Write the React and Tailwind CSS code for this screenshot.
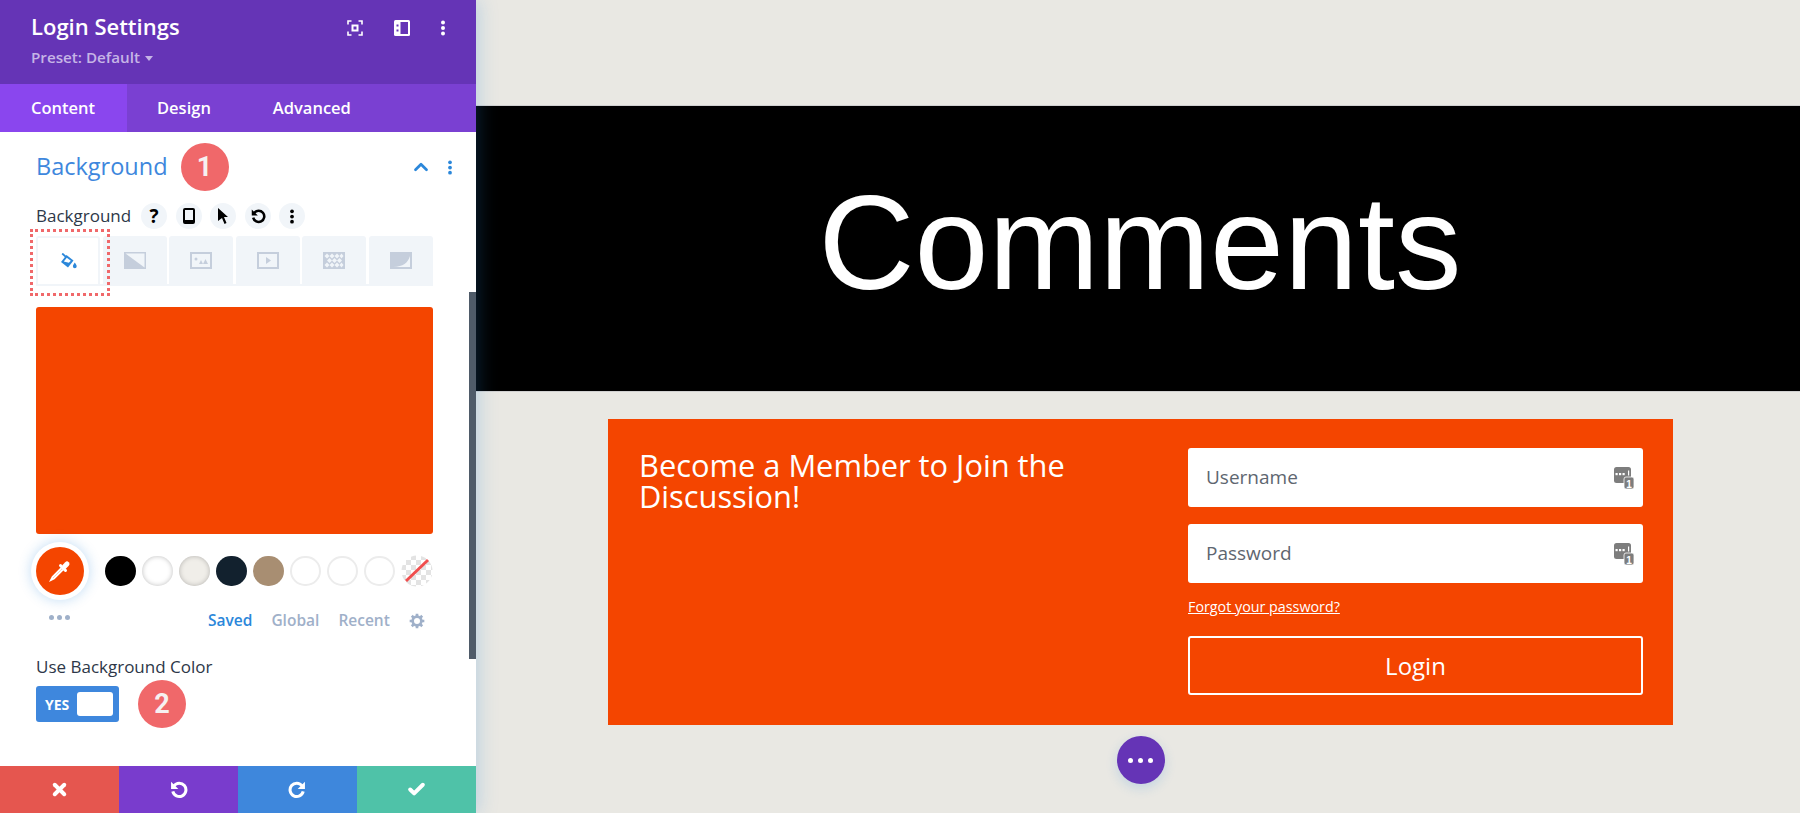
import { Check, ChevronUp, X } from 'lucide-react'

const openSans = "font-['Open_Sans',sans-serif]"

function Dots({ className = '' }) {
  return (
    <svg viewBox="0 0 6 16" className={className} fill="currentColor">
      <circle cx="3" cy="2.5" r="2" />
      <circle cx="3" cy="8" r="2" />
      <circle cx="3" cy="13.5" r="2" />
    </svg>
  )
}

function UndoIcon({ className = '', flip = false }) {
  return (
    <svg viewBox="0 0 20 20" className={`${className} ${flip ? '-scale-x-100' : ''}`} fill="none">
      <path d="M5.2 6.2A7 7 0 1 1 4 12" stroke="currentColor" strokeWidth="3.2" />
      <path d="M2.2 1.8v7.600h7.600z" fill="currentColor" />
    </svg>
  )
}

function OnePassword() {
  return (
    <svg viewBox="0 0 20 22" className="absolute right-[9px] top-[19px] h-[22px] w-[20px]">
      <rect x="0" y="0" width="17" height="16" rx="2.5" fill="#7d7d7d" />
      <rect x="10" y="10" width="10" height="12" rx="2" fill="#7d7d7d" stroke="#fff" strokeWidth="0.8" />
      <rect x="1.5" y="6" width="2.2" height="2.2" fill="#fff" />
      <rect x="5" y="6" width="2.2" height="2.2" fill="#fff" />
      <rect x="8.5" y="6" width="2.2" height="2.2" fill="#fff" />
      <rect x="14" y="3.5" width="1.2" height="5" fill="#fff" />
      <text x="15" y="20.5" textAnchor="middle" fontSize="10" fontWeight="700" fill="#fff" fontFamily="Liberation Sans, sans-serif">1</text>
    </svg>
  )
}

function Badge({ children, className = '' }) {
  return (
    <div className={`flex h-[48px] w-[48px] shrink-0 items-center justify-center rounded-full bg-[#f0686a] text-[27px] font-bold text-[#f6f1f1] font-['Roboto',sans-serif] ${className}`}>
      {children}
    </div>
  )
}

function RoundBtn({ children }) {
  return <div className="flex h-[26px] w-[26px] items-center justify-center rounded-full bg-[#f1f5f9] text-black">{children}</div>
}

const bgTabs = [
  <svg key="grad" viewBox="0 0 22 17" className="h-[17px] w-[22px]"><path d="M0 0h22v17H0z" fill="#c5cedc" /><path d="M1.5 1.5L20.5 15.5V1.5z" fill="#f1f5f9" /></svg>,
  <svg key="img" viewBox="0 0 22 17" className="h-[17px] w-[22px]"><rect x="1" y="1" width="20" height="15" fill="none" stroke="#c5cedc" strokeWidth="2" /><path d="M9 12l2-4 2 4zM13 12l2.500-5 2.500 5z" fill="#c5cedc" /><circle cx="6" cy="7" r="1.500" fill="#c5cedc" /></svg>,
  <svg key="vid" viewBox="0 0 22 17" className="h-[17px] w-[22px]"><rect x="1" y="1" width="20" height="15" fill="none" stroke="#c5cedc" strokeWidth="2" /><path d="M9 5l5 3.500-5 3.500z" fill="#c5cedc" /></svg>,
  <svg key="pat" viewBox="0 0 22 17" className="h-[17px] w-[22px]">
    <path d="M0 0h22v17H0z" fill="#c5cedc" />
    <path d="M1.500 4L4 1.500 6.500 4 4 6.500zM6.500 4L9 1.500 11.500 4 9 6.500zM11.500 4L14 1.500 16.500 4 14 6.500zM16.500 4L18.500 1.500 20.500 4 18.500 6.500zM4 8.500l2.500-2.500L9 8.500 6.500 11zM9 8.500l2.500-2.500L14 8.500 11.500 11zM14 8.500l2.500-2.500L19 8.500 16.500 11zM1.500 13L4 10.500 6.500 13 4 15.500zM6.500 13L9 10.500 11.500 13 9 15.500zM11.500 13L14 10.500 16.500 13 14 15.500zM16.500 13L18.500 10.500 20.500 13 18.500 15.500z" fill="#f1f5f9" />
  </svg>,
  <svg key="mask" viewBox="0 0 22 17" className="h-[17px] w-[22px]"><path d="M0 0h22v17H0z" fill="#c5cedc" /><path d="M20 4V15H3.500C13 14.500 18 11 20 4z" fill="#f1f5f9" /></svg>,
]

const swatches = [
  'bg-black',
  'bg-white shadow-[inset_0_0_5px_rgba(0,0,0,0.25)]',
  'bg-[#f0eee9] shadow-[inset_0_0_5px_rgba(0,0,0,0.25)]',
  'bg-[#12212e]',
  'bg-[#a88e72]',
  'bg-white border-2 border-[#ececec]',
  'bg-white border-2 border-[#ececec]',
  'bg-white border-2 border-[#ececec]',
]

function Sidebar() {
  return (
    <div className={`relative z-10 flex h-[813px] w-[476px] shrink-0 flex-col bg-white shadow-[2px_0_18px_rgba(43,135,218,0.25)] ${openSans}`}>
      {/* Header */}
      <div className="flex h-[84px] items-start justify-between bg-[#6534b6] pl-[31px] pr-[30px]">
        <div>
          <div className="mt-[11px] text-[22px] font-semibold leading-[30px] text-white">Login Settings</div>
          <div className="mt-[6px] flex items-center text-[15.200px] font-semibold leading-[20px] text-[#c5b4e6]">
            Preset: Default
            <span className="ml-[5px] mt-[2px] h-0 w-0 border-x-[4px] border-t-[5px] border-x-transparent border-t-[#c5b4e6]" />
          </div>
        </div>
        <div className="mt-[20px] flex items-center text-white">
          <svg viewBox="0 0 16 16" className="h-[16px] w-[16px]" fill="none" stroke="currentColor" strokeWidth="1.600">
            <path d="M1 4.500V1h3.500M11.500 1H15v3.500M15 11.500V15h-3.500M4.500 15H1v-3.500" />
            <rect x="5.500" y="5.500" width="5" height="5" strokeWidth="2" />
          </svg>
          <svg viewBox="0 0 16 16" className="ml-[31px] h-[16px] w-[16px]">
            <rect x="0" y="0" width="16" height="16" rx="1.500" fill="currentColor" />
            <path d="M6.500 2H14v12H6.500zM2.500 4.500h2v2h-2zM2.500 9.500h2v2h-2z" fill="#6534b6" />
          </svg>
          <Dots className="ml-[30px] h-[16px] w-[6px]" />
        </div>
      </div>

      {/* Tabs */}
      <div className="flex h-[48px] items-center bg-[#7a40d2] text-[16.500px] font-semibold text-white">
        <div className="flex h-full w-[127px] items-center bg-[#8a46ee] pl-[31px]">Content</div>
        <div className="ml-[30px]">Design</div>
        <div className="ml-[62px]">Advanced</div>
      </div>

      {/* Body */}
      <div className="relative flex-1 px-[36px]">
        <div className="absolute right-0 top-[160px] h-[367px] w-[7px] bg-[#4f5b69]" />

        <div className="mt-[11px] flex h-[48px] items-center">
          <span className="text-[23.500px] leading-none text-[#3e87dd]">Background</span>
          <Badge className="ml-[13px]">1</Badge>
          <ChevronUp size={22} strokeWidth={3} className="ml-auto text-[#2b87da]" />
          <Dots className="ml-[15px] mr-[-13px] h-[15px] w-[6px] text-[#2b87da]" />
        </div>

        <div className="mt-[12px] flex h-[26px] items-center">
          <span className="w-[105px] text-[17px] font-medium text-[#2d3748]">Background</span>
          <div className="flex gap-[8.500px]">
            <RoundBtn><span className="text-[19px] font-bold">?</span></RoundBtn>
            <RoundBtn>
              <svg viewBox="0 0 12 16" className="h-[16px] w-[12px]"><path d="M2 0h8a2 2 0 0 1 2 2v12a2 2 0 0 1-2 2H2a2 2 0 0 1-2-2V2a2 2 0 0 1 2-2zm0 2v10h8V2z" fill="currentColor" fillRule="evenodd" /></svg>
            </RoundBtn>
            <RoundBtn>
              <svg viewBox="0 0 12 16" className="h-[16px] w-[12px]"><path d="M1 0l10 9H7l2.500 6-2 1-2.500-6-4 3z" fill="currentColor" /></svg>
            </RoundBtn>
            <RoundBtn><UndoIcon className="h-[16px] w-[16px]" /></RoundBtn>
            <RoundBtn><Dots className="h-[15px] w-[6px]" /></RoundBtn>
          </div>
        </div>

        {/* Background type tabs */}
        <div className="relative mt-[7px] flex w-[397px] gap-[2.500px] border-b-2 border-[#f1f5f9]">
          <div className="absolute left-[-6px] top-[-7px] h-[67px] w-[80px] border-[3px] border-dotted border-[#f0686a]" />
          <div className="flex h-[48px] w-[64px] items-center justify-center rounded-t-[3px] border-x-2 border-t-2 border-[#f1f5f9] bg-white">
            <svg viewBox="0 0 17 16" className="h-[16px] w-[17px] text-[#2b87da]">
              <path d="M2.200 0.500L7 4.800" stroke="currentColor" strokeWidth="1.800" />
              <path d="M6.500 2L13.500 7.500 8 14.500 1 9z" fill="currentColor" />
              <path d="M6.800 4.800L10.800 7.800 8.800 9.800 3.800 8.500z" fill="#fff" />
              <path d="M14.800 9.500c1.200 1.800 1.900 2.700 1.900 3.800a1.900 1.900 0 0 1-3.800 0c0-1.100.7-2 1.900-3.800z" fill="currentColor" />
            </svg>
          </div>
          {bgTabs.map((icon, i) => (
            <div key={i} className="flex h-[48px] w-[64px] items-center justify-center rounded-t-[3px] bg-[#f1f5f9]">{icon}</div>
          ))}
        </div>

        {/* Colour preview */}
        <div className="mt-[21px] h-[227px] w-[397px] rounded-[3px] bg-[#f44500]" />

        {/* Swatches */}
        <div className="mt-[13px] flex items-center">
          <div className="flex h-[48px] w-[48px] shrink-0 items-center justify-center rounded-full bg-[#f44500] shadow-[0_0_0_5px_#fff,0_0_12px_6px_rgba(43,135,218,0.25)]">
            <svg viewBox="0 0 22 22" className="h-[22px] w-[22px]">
              <path d="M15.500 6.500L18 4" stroke="#fff" strokeWidth="5" strokeLinecap="round" />
              <path d="M11.500 5.500L16.500 10.500" stroke="#fff" strokeWidth="3" strokeLinecap="round" />
              <path d="M12.500 8L3.500 17 2 20 5 18.500 14 9.500" fill="none" stroke="#fff" strokeWidth="1.800" />
            </svg>
          </div>
          <div className="ml-[21px] flex items-center gap-[6.500px]">
            {swatches.map((s, i) => <div key={i} className={`h-[30.500px] w-[30.500px] rounded-full ${s}`} />)}
            <svg viewBox="0 0 32 32" className="h-[32px] w-[32px]">
              <defs>
                <pattern id="checker" width="10" height="10" patternUnits="userSpaceOnUse">
                  <rect width="10" height="10" fill="#fff" />
                  <rect width="5" height="5" fill="#e3e3e3" />
                  <rect x="5" y="5" width="5" height="5" fill="#e3e3e3" />
                </pattern>
              </defs>
              <circle cx="16" cy="16" r="15.500" fill="url(#checker)" />
              <path d="M5 26L27 5" stroke="#f04e4e" strokeWidth="3" />
            </svg>
          </div>
        </div>

        <div className="mt-[14px] flex h-[24px] items-center text-[15.500px] font-semibold text-[#9fb0c9]">
          <div className="ml-[13px] flex -translate-y-[4px] gap-[3px]">
            <span className="h-[5px] w-[5px] rounded-full bg-[#9fb0c9]" />
            <span className="h-[5px] w-[5px] rounded-full bg-[#9fb0c9]" />
            <span className="h-[5px] w-[5px] rounded-full bg-[#9fb0c9]" />
          </div>
          <span className="ml-[138px] text-[#2b87da]">Saved</span>
          <span className="ml-[19px]">Global</span>
          <span className="ml-[19px]">Recent</span>
          <svg viewBox="0 0 24 24" className="ml-[19px] h-[16px] w-[16px]" fill="none" stroke="currentColor">
            <circle cx="12" cy="12" r="6.500" strokeWidth="4" />
            <path d="M12 1v5M12 18v5M1 12h5M18 12h5M4.200 4.200l3.500 3.500M16.300 16.300l3.500 3.500M4.200 19.800l3.500-3.500M16.300 7.700l3.500-3.500" strokeWidth="4" />
          </svg>
        </div>

        <div className="mt-[23px] text-[17px] font-medium leading-[22px] text-[#2d3748]">Use Background Color</div>
        <div className="mt-[2px] flex items-center">
          <div className="flex h-[36px] w-[83px] items-center rounded-[3px] bg-[#3e87dd] pl-[9px] pr-[6px]">
            <span className="text-[14px] font-bold text-white">YES</span>
            <span className="ml-auto h-[24px] w-[36px] rounded-[3px] bg-white" />
          </div>
          <Badge className="ml-[19px]">2</Badge>
        </div>
      </div>

      {/* Footer */}
      <div className="grid h-[47px] grid-cols-4 text-white">
        <div className="flex items-center justify-center bg-[#e5564f]"><X size={19} strokeWidth={5} /></div>
        <div className="flex items-center justify-center bg-[#793ccd]"><UndoIcon className="h-[19px] w-[19px]" /></div>
        <div className="flex items-center justify-center bg-[#3e87dc]"><UndoIcon flip className="h-[19px] w-[19px]" /></div>
        <div className="flex items-center justify-center bg-[#4fc2a8]"><Check size={19} strokeWidth={5} /></div>
      </div>
    </div>
  )
}

function Field({ label, className = '' }) {
  return (
    <div className={`relative flex h-[59px] items-center rounded-[3px] bg-white pl-[18px] text-[19px] text-[#5e6670] ${className}`}>
      {label}
      <OnePassword />
    </div>
  )
}

export default function App() {
  return (
    <div className="flex h-[813px] w-[1800px] overflow-hidden bg-[#e9e8e3]">
      <Sidebar />
      <div className="flex-1 pt-[105px]">
        <div className="flex h-[287px] items-center justify-center border-y border-[#d0d0d0] bg-black pb-[11px] pl-[4px] font-['Liberation_Sans',sans-serif] text-[133px] leading-none text-white">
          Comments
        </div>

        <div className={`ml-[132px] mt-[27px] flex h-[306px] w-[1065px] bg-[#f44500] pl-[31px] pr-[30px] pt-[29px] text-white ${openSans}`}>
          <div className="flex-1 pt-[2px] text-[30.800px] leading-[31px]">
            <div>Become a Member to Join the</div>
            <div>Discussion!</div>
          </div>
          <div className="w-[455px]">
            <Field label="Username" />
            <Field label="Password" className="mt-[17px]" />
            <div className="mt-[14px] text-[14.300px] leading-[20px] underline">Forgot your password?</div>
            <div className="mt-[19px] flex h-[59px] items-center justify-center rounded-[3px] border-2 border-white text-[24px]">Login</div>
          </div>
        </div>

        <div className="ml-[132px] mt-[11px] flex w-[1065px] justify-center">
          <div className="flex h-[48px] w-[48px] items-center justify-center gap-[5px] rounded-full bg-[#6534b6] shadow-[0_4px_12px_rgba(43,135,218,0.2)]">
            <span className="h-[5px] w-[5px] rounded-full bg-white" />
            <span className="h-[5px] w-[5px] rounded-full bg-white" />
            <span className="h-[5px] w-[5px] rounded-full bg-white" />
          </div>
        </div>
      </div>
    </div>
  )
}
